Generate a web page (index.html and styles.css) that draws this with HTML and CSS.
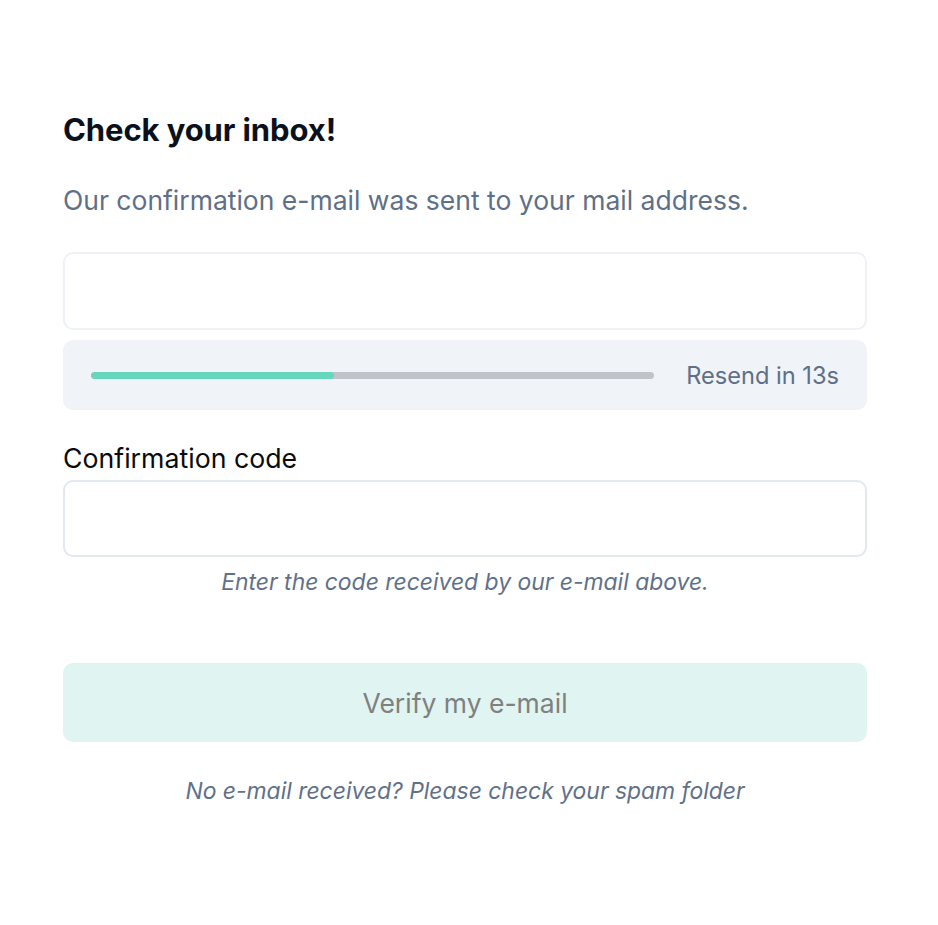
FILE: index.html
```html
<!DOCTYPE html>
<html lang="en">
<head>
<meta charset="utf-8">
<link rel="stylesheet" href="styles.css">
</head>
<body>
<main class="card">
  <h1 class="title">Check your inbox!</h1>
  <p class="subtitle">Our confirmation e-mail was sent to your mail address.</p>
  <div class="email-box"></div>
  <div class="resend">
    <div class="track"><div class="fill" style="width:43.2%"></div></div>
    <span class="resend-text">Resend in 13s</span>
  </div>
  <label class="label" for="code">Confirmation code</label>
  <input class="code-input" id="code" type="text">
  <p class="hint">Enter the code received by our e-mail above.</p>
  <button class="verify" type="button">Verify my e-mail</button>
  <p class="hint bottom">No e-mail received? Please check your spam folder</p>
</main>
</body>
</html>
```
FILE: styles.css
```css
* { box-sizing: border-box; }
html, body { margin: 0; background: #fff; }
body { font-family: Inter, "Noto Sans", sans-serif; }
.card {
  display: flex;
  flex-direction: column;
  padding: 111px 71px 0 63px;
}
.title {
  margin: 0;
  font-size: 31px;
  font-weight: 700;
  line-height: 38px;
  color: #0b111c;
  letter-spacing: -0.1px;
}
.subtitle {
  margin: 34px 0 0;
  font-size: 26.5px;
  line-height: 34px;
  color: #5e6f88;
}
.email-box {
  margin-top: 35px;
  height: 78px;
  border: 2px solid #eef2f7;
  border-radius: 10px;
}
.resend {
  margin-top: 10px;
  height: 70px;
  background: #f0f3f8;
  border-radius: 10px;
  display: flex;
  align-items: center;
  padding: 0 28px;
  gap: 32px;
}
.track {
  flex: 1;
  height: 7px;
  border-radius: 4px;
  background: #c0c4ca;
  overflow: hidden;
}
.fill { height: 100%; background: #66d6bd; border-radius: 4px; }
.resend-text {
  font-size: 23.6px;
  color: #5e6f88;
}
.label {
  margin-top: 31px;
  font-size: 26.7px;
  line-height: 34px;
  color: #0b0b0b;
}
.code-input {
  margin-top: 5px;
  height: 77px;
  border: 2px solid #e2e8f0;
  border-radius: 10px;
  background: #fff;
  font: inherit;
  outline: none;
}
.hint {
  margin: 10px 0 0;
  text-align: center;
  font-size: 22.9px;
  line-height: 30px;
  font-style: italic;
  color: #5f7189;
}
.verify {
  margin-top: 66px;
  height: 79px;
  border: 0;
  border-radius: 10px;
  background: #e0f4f1;
  font-family: inherit;
  font-size: 26.5px;
  color: #808080;
}
.hint.bottom { margin-top: 34px; }
```
